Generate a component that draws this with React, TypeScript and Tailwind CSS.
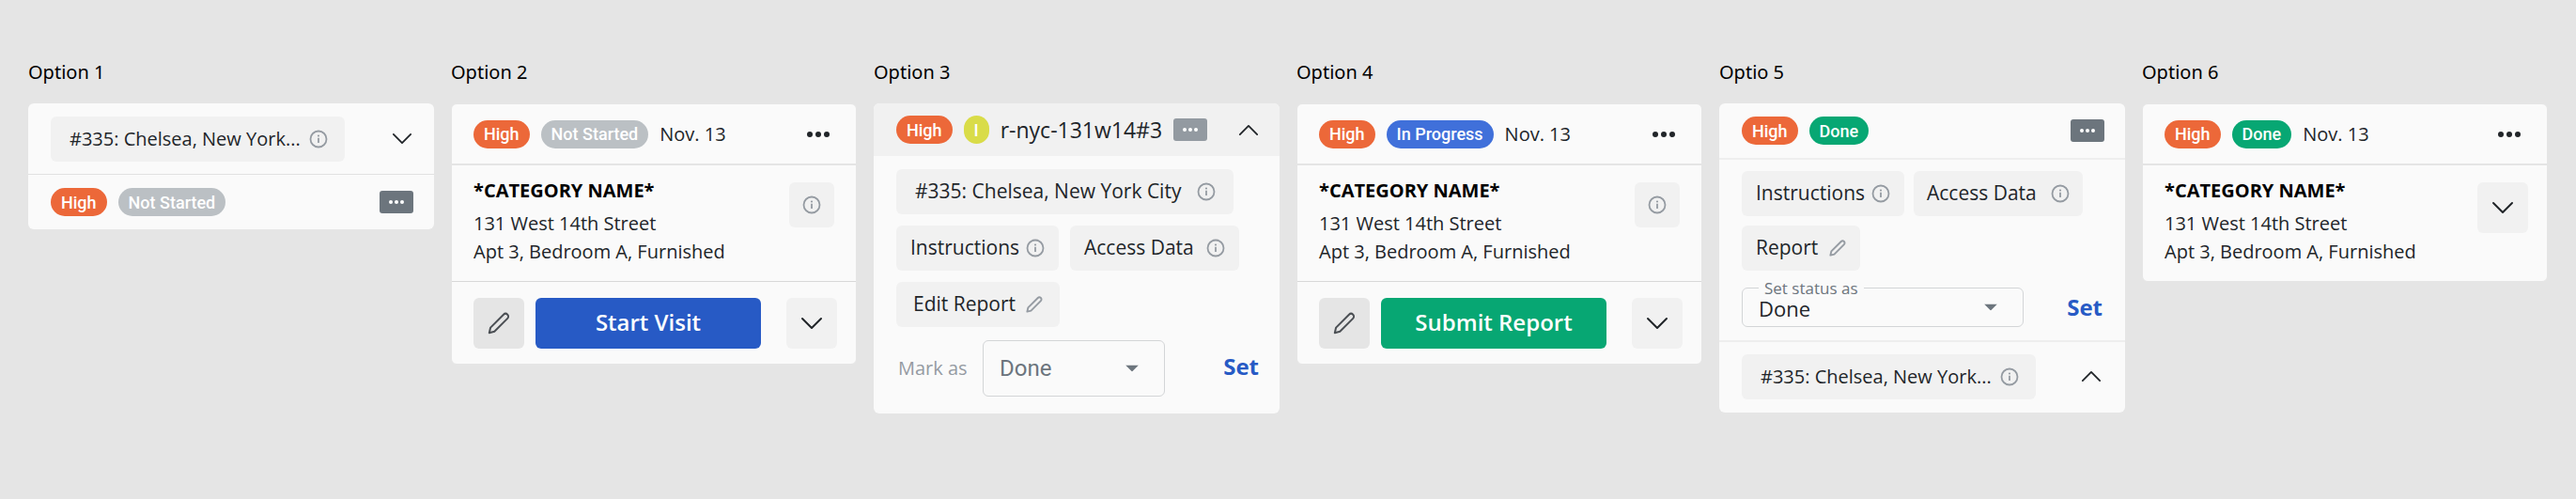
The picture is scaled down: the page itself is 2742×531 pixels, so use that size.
import type { ReactNode } from "react";

const body = "font-['Open_Sans','Noto_Sans',sans-serif]";

function Chevron({ up = false, small = false }: { up?: boolean; small?: boolean }) {
  return (
    <svg
      viewBox="0 0 24 14"
      className={small ? "h-[13px] w-[22px]" : "h-[14px] w-6"}
      fill="none"
      stroke="#212529"
      strokeWidth="2"
      strokeLinecap="round"
      strokeLinejoin="round"
      aria-hidden="true"
    >
      <path d={up ? "M2 12 12 2l10 10" : "M2 2l10 10L22 2"} />
    </svg>
  );
}

function InfoIcon() {
  return (
    <svg viewBox="0 0 20 20" className="size-5 shrink-0" fill="none" aria-hidden="true">
      <circle cx="10" cy="10" r="8.5" stroke="#959ba2" strokeWidth="1.8" />
      <path d="M10 8.8v5.2" stroke="#959ba2" strokeWidth="1.8" />
      <circle cx="10" cy="6.5" r="1.1" fill="#959ba2" />
    </svg>
  );
}

function Pencil({ large = false }: { large?: boolean }) {
  return (
    <svg
      viewBox="0 0 24 24"
      className={large ? "size-6" : "size-[18px] shrink-0"}
      fill="none"
      stroke={large ? "#4b4f54" : "#959ba2"}
      strokeWidth={large ? 2 : 2.5}
      strokeLinejoin="round"
      aria-hidden="true"
    >
      <path d="M1.8 22.2l1.3-5.6L17 2.7a2.95 2.95 0 0 1 4.2 4.2L7.3 20.8z" />
    </svg>
  );
}

function Dots() {
  return (
    <svg viewBox="0 0 24 6" className="h-[6px] w-6" fill="#212529" aria-hidden="true">
      <circle cx="3" cy="3" r="3" />
      <circle cx="12" cy="3" r="3" />
      <circle cx="21" cy="3" r="3" />
    </svg>
  );
}

function MenuButton({ light = false }: { light?: boolean }) {
  return (
    <button
      type="button"
      aria-label="More"
      className={`flex h-6 w-9 shrink-0 items-center justify-center rounded-[3px] ${light ? "bg-[#939aa1]" : "bg-[#6c757d]"}`}
    >
      <svg viewBox="0 0 16 4" className="h-1 w-4" fill="#ffffff" aria-hidden="true">
        <circle cx="2" cy="2" r="2" />
        <circle cx="8" cy="2" r="2" />
        <circle cx="14" cy="2" r="2" />
      </svg>
    </button>
  );
}

const tones = {
  high: "bg-[#ec6839]",
  idle: "bg-[#bbc0c4]",
  progress: "bg-[#4070da]",
  done: "bg-[#07a773]",
  lime: "bg-[#d9dc48]",
};

function Pill({ tone, children }: { tone: keyof typeof tones; children: ReactNode }) {
  return (
    <span
      className={`flex h-[30px] shrink-0 items-center rounded-full px-[11px] font-['Roboto',sans-serif] text-[18px] font-medium whitespace-nowrap text-white ${tones[tone]}`}
    >
      {children}
    </span>
  );
}

function Chip({ className = "", children }: { className?: string; children: ReactNode }) {
  return (
    <button
      type="button"
      className={`flex h-12 items-center justify-between rounded-md bg-[#f1f1f1] whitespace-nowrap text-[#212529] ${className}`}
    >
      {children}
    </button>
  );
}

function Option({ label, children }: { label: string; children: ReactNode }) {
  return (
    <section className="min-w-0">
      <h2 className="mb-[21px] font-['Noto_Sans',sans-serif] text-xl leading-6 text-black">{label}</h2>
      {children}
    </section>
  );
}

function Card({ inset = false, children }: { inset?: boolean; children: ReactNode }) {
  return (
    <article
      className={`overflow-hidden rounded-md bg-[#fafafa] text-[#212529] ${inset ? "border border-[#e5e5e5]" : ""}`}
    >
      {children}
    </article>
  );
}

function VisitHeader({ tone, status }: { tone: keyof typeof tones; status: string }) {
  return (
    <header className="flex h-[65px] items-center gap-3 border-b-2 border-[#e5e5e5] pr-7 pl-[23px]">
      <Pill tone="high">High</Pill>
      <Pill tone={tone}>{status}</Pill>
      <span className="text-xl whitespace-nowrap">Nov. 13</span>
      <button type="button" aria-label="More" className="ml-auto">
        <Dots />
      </button>
    </header>
  );
}

function Address({ children }: { children: ReactNode }) {
  return (
    <div className="flex h-[123px] items-start justify-between pt-[18px] pl-[23px]">
      <div className="-mt-[6px] text-xl leading-[30px] whitespace-nowrap">
        <h3 className="mb-[5px] font-bold text-black">*CATEGORY NAME*</h3>
        <p>131 West 14th Street</p>
        <p>Apt 3, Bedroom A, Furnished</p>
      </div>
      {children}
    </div>
  );
}

function ExpandButton() {
  return (
    <button
      type="button"
      aria-label="Expand"
      className="mr-5 flex size-[54px] shrink-0 items-center justify-center rounded-md bg-[#f1f1f1]"
    >
      <Chevron />
    </button>
  );
}

function VisitCard({
  tone,
  status,
  action,
  actionTone,
}: {
  tone: keyof typeof tones;
  status: string;
  action: string;
  actionTone: string;
}) {
  return (
    <Card inset>
      <VisitHeader tone={tone} status={status} />
      <Address>
        <button
          type="button"
          aria-label="Details"
          className="mr-[23px] flex size-12 items-center justify-center rounded-md bg-[#f1f1f1]"
        >
          <InfoIcon />
        </button>
      </Address>
      <footer className="flex h-[88px] items-center border-t border-[#d8d8d8] pl-[23px]">
        <button
          type="button"
          aria-label="Edit"
          className="flex size-[54px] shrink-0 items-center justify-center rounded-md bg-[#e5e5e5]"
        >
          <Pencil large />
        </button>
        <button
          type="button"
          className={`mr-[27px] ml-3 h-[54px] flex-1 rounded-md pb-[2px] text-2xl font-semibold whitespace-nowrap text-white ${actionTone}`}
        >
          {action}
        </button>
        <ExpandButton />
      </footer>
    </Card>
  );
}

function Caret({ className }: { className: string }) {
  return (
    <svg
      viewBox="0 0 14 7"
      className={`pointer-events-none absolute top-1/2 h-[7px] w-[14px] -translate-y-1/2 ${className}`}
      fill="#6c757d"
      aria-hidden="true"
    >
      <path d="M0 0h14L7 7z" />
    </svg>
  );
}

function LocationChip() {
  return (
    <Chip className="w-[313px] pr-[18px] pl-5 text-xl">
      #335: Chelsea, New York...
      <InfoIcon />
    </Chip>
  );
}

export default function App() {
  return (
    <main className={`min-h-screen bg-[#e5e5e5] px-[30px] pt-[65px] pb-10 ${body}`}>
      <div className="grid grid-cols-6 items-start gap-[18px]">
        <Option label="Option 1">
          <Card>
            <div className="flex h-[76px] items-center justify-between border-b border-[#e1e1e1] pr-[23px] pl-6">
              <LocationChip />
              <button type="button" aria-label="Expand">
                <Chevron small />
              </button>
            </div>
            <div className="flex h-[58px] items-center gap-3 pr-[22px] pl-6">
              <Pill tone="high">High</Pill>
              <Pill tone="idle">Not Started</Pill>
              <div className="ml-auto">
                <MenuButton />
              </div>
            </div>
          </Card>
        </Option>

        <Option label="Option 2">
          <VisitCard tone="idle" status="Not Started" action="Start Visit" actionTone="bg-[#275ac5]" />
        </Option>

        <Option label="Option 3">
          <Card>
            <header className="flex h-14 items-center gap-3 bg-[#f1f1f1] pr-[22px] pl-6">
              <Pill tone="high">High</Pill>
              <Pill tone="lime">I</Pill>
              <span className="text-[23px] whitespace-nowrap">r-nyc-131w14#3</span>
              <MenuButton light />
              <button type="button" aria-label="Collapse" className="ml-auto">
                <Chevron up small />
              </button>
            </header>
            <div className="px-6 pt-[14px] pb-[18px] text-[21px]">
              <div className="flex flex-wrap gap-3">
                <Chip className="w-[359px] pr-[19px] pl-5">
                  #335: Chelsea, New York City
                  <InfoIcon />
                </Chip>
                <Chip className="w-[173px] px-[15px]">
                  Instructions
                  <InfoIcon />
                </Chip>
                <Chip className="w-[180px] px-[15px]">
                  Access Data
                  <InfoIcon />
                </Chip>
                <Chip className="w-[174px] px-[18px]">
                  Edit Report
                  <Pencil />
                </Chip>
              </div>
              <div className="mt-[14px] flex items-center">
                <label htmlFor="mark-as" className="w-[92px] pl-[2px] text-xl whitespace-nowrap text-[#959ba2]">
                  Mark as
                </label>
                <div className="relative w-[194px]">
                  <select
                    id="mark-as"
                    className="h-[60px] w-full appearance-none rounded-md border border-[#d3d5d7] bg-transparent pl-[17px] font-['Roboto',sans-serif] text-2xl text-[#6c757d]"
                  >
                    <option>Done</option>
                  </select>
                  <Caret className="right-7" />
                </div>
                <button type="button" className="-mr-[2px] ml-auto pb-1 text-2xl font-bold text-[#275ac5]">
                  Set
                </button>
              </div>
            </div>
          </Card>
        </Option>

        <Option label="Option 4">
          <VisitCard tone="progress" status="In Progress" action="Submit Report" actionTone="bg-[#07a773]" />
        </Option>

        <Option label="Optio 5">
          <Card>
            <header className="flex h-[60px] items-center gap-3 border-b-2 border-[#eeeeee] pr-[22px] pl-6">
              <Pill tone="high">High</Pill>
              <Pill tone="done">Done</Pill>
              <div className="ml-auto">
                <MenuButton />
              </div>
            </header>
            <div className="border-b-2 border-[#eeeeee] px-6 pt-3 pb-[14px] text-[21px]">
              <div className="flex flex-wrap gap-[10px]">
                <Chip className="w-[173px] px-[15px]">
                  Instructions
                  <InfoIcon />
                </Chip>
                <Chip className="w-[180px] px-[14px]">
                  Access Data
                  <InfoIcon />
                </Chip>
                <Chip className="w-[126px] px-[15px]">
                  Report
                  <Pencil />
                </Chip>
              </div>
              <div className="mt-[18px] flex items-center">
                <div className="relative w-[300px]">
                  <select
                    id="set-status"
                    className="h-[42px] w-full appearance-none rounded-md border border-[#d3d5d7] bg-transparent pt-[2px] pl-[17px] text-[22px] text-[#212529]"
                  >
                    <option>Done</option>
                  </select>
                  <label
                    htmlFor="set-status"
                    className="absolute -top-[9px] left-[18px] bg-[#fafafa] px-[6px] text-[17px] leading-5 whitespace-nowrap text-[#6c757d]"
                  >
                    Set status as
                  </label>
                  <Caret className="right-7" />
                </div>
                <button type="button" className="ml-auto text-2xl font-bold text-[#275ac5]">
                  Set
                </button>
              </div>
            </div>
            <div className="flex h-[75px] items-center justify-between pr-[25px] pb-[2px] pl-6">
              <LocationChip />
              <button type="button" aria-label="Collapse">
                <Chevron up small />
              </button>
            </div>
          </Card>
        </Option>

        <Option label="Option 6">
          <Card inset>
            <VisitHeader tone="done" status="Done" />
            <Address>
              <ExpandButton />
            </Address>
          </Card>
        </Option>
      </div>
    </main>
  );
}
